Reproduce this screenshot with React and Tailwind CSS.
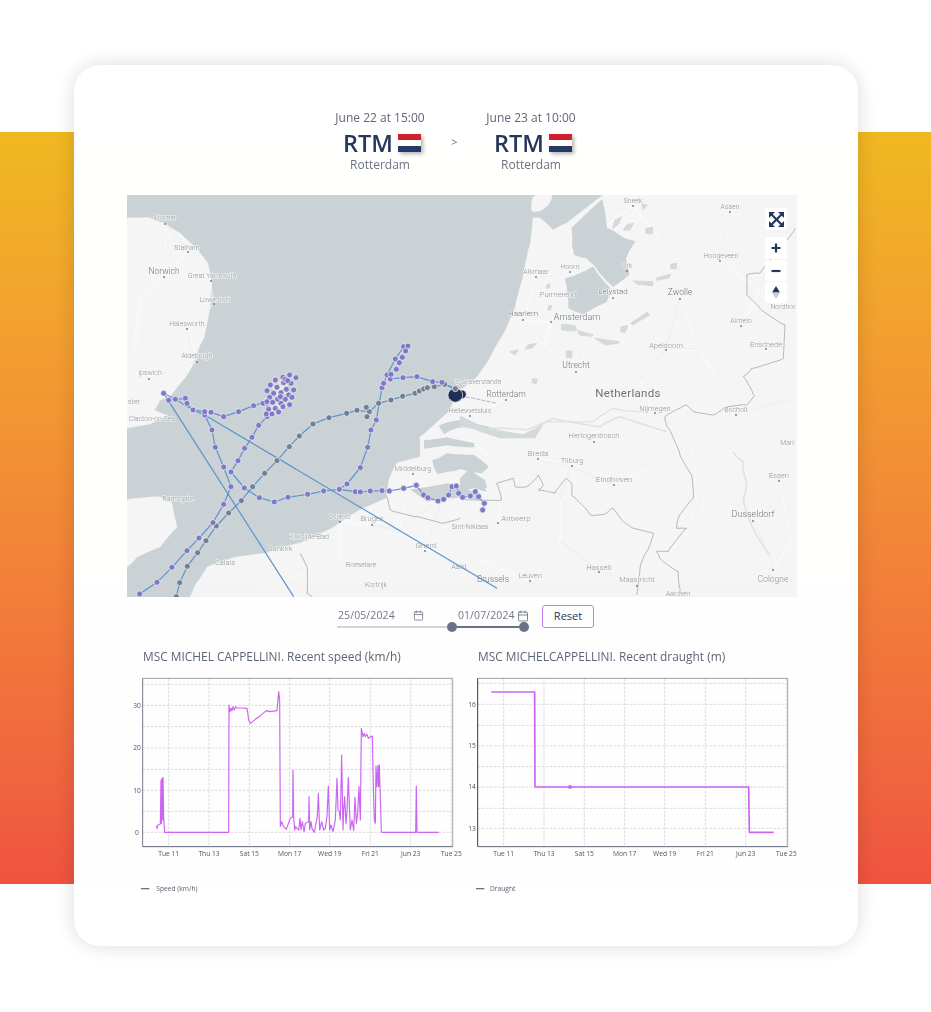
import React from "react";
import { Calendar } from "lucide-react";

const FONT = { fontFamily: '"Open Sans", sans-serif' };

const pts = (a) => a.map((p) => p.join(",")).join(" ");

/* roughen a hand traced outline so coast and border drawings don't look straight */
function jig(list, step = 8, amp = 1.2, closed = false) {
  const out = [];
  const all = closed ? [...list, list[0]] : list;
  for (let i = 0; i < all.length - 1; i++) {
    const [ax, ay] = all[i];
    const [bx, by] = all[i + 1];
    const len = Math.hypot(bx - ax, by - ay);
    const n = Math.max(1, Math.round(len / step));
    const nx = -(by - ay) / (len || 1);
    const ny = (bx - ax) / (len || 1);
    for (let k = 0; k < n; k++) {
      const t = k / n;
      const s = k === 0 ? 0 : Math.sin(ax * 12.9 + ay * 78.2 + k * 37.7) * amp;
      out.push([+(ax + (bx - ax) * t + nx * s).toFixed(1), +(ay + (by - ay) * t + ny * s).toFixed(1)]);
    }
  }
  out.push(all[all.length - 1]);
  return out;
}

const trackA = [[38,762],[90,727],[135,682],[180,632],[216,594],[258,548],[290,493],[312,440],[290,381],[265,322],[255,270],[233,225],[198,210],[145,178],[110,160]];
const trackA2 = [[125,181],[145,178],[175,175],[180,190],[198,210],[233,215],[252,217],[290,230],[335,215],[380,197],[420,185]];
const trackA3 = [[420,230],[395,256],[375,292],[353,325],[333,362],[312,396],[352,444],[397,473],[442,486],[483,472],[542,463],[590,453],[637,448],[685,455],[700,456],[730,453],[765,452],[787,453],[830,445],[868,436],[890,465],[903,473],[933,483],[950,478],[965,465],[975,440],[988,438],[995,460],[1007,472],[1030,468],[1045,455],[1055,470],[1072,490],[1067,510]];
const trackB = [[637,448],[660,432],[700,383],[722,322],[732,270],[748,240],[765,143],[780,105],[805,57],[830,20],[843,18]];
const trackB2 = [[790,117],[828,113],[870,110],[917,125],[945,127],[985,150]];
const extraB = [[817,68],[826,52],[836,33],[808,88],[792,103],[770,130]];
const trackC = [[148,770],[158,728],[181,679],[212,638],[237,602],[268,558],[305,519],[343,482],[377,440],[413,400],[450,362],[487,320],[517,288],[558,252],[606,233],[659,220],[690,211],[727,215],[755,190],[792,180],[827,169],[864,160],[877,153],[890,147],[901,143],[922,140],[953,133],[985,145]];
const extraC = [[718,202],[720,230]];
const cluster = [[468,112],[488,105],[507,113],[445,120],[470,128],[492,130],[430,135],[450,142],[478,148],[500,150],[420,152],[440,160],[462,158],[485,165],[428,172],[452,178],[475,178],[495,172],[408,190],[420,185],[437,187],[462,190],[488,194],[425,208],[445,205],[468,200],[418,222],[435,222],[455,216],[475,118],[460,170],[482,122]];
const clusterLines = [[430,135],[470,178],[440,160],[488,130],[450,142],[495,172],[420,185],[468,112],[428,172],[478,148],[418,222],[462,190],[445,205],[488,194],[435,222],[475,178],[412,178],[450,195]];

const labels = [
  ["Cromer",165,220,7],["Stalham",187,250,7],["Norwich",164,274,8.5,1],["Great Yarmouth",212,278,7],["Lowestoft",215,302,7],["Halesworth",187,326,7],["Aldeburgh",197,358,7],["Ipswich",150,375,7],["ster",134,404,7],["Clacton-on-Sea",152,421,7],["Ramsgate",178,501,7],["Ostend",339,519,7],["Koksijde-Bad",309,539,7],["Dunkirk",280,551,7.5],["Calais",225,565,7.5],["Bruges",372,521,7.5],["Ghent",426,548,8],["Roeselare",361,567,7],["Kortrijk",376,587,7],["Aalst",459,569,7],["Brussels",493,582,8.5,1],["Middelburg",413,471,7.5],["Hellevoetsluis",470,413,7],["'s-Gravenzande",478,384,7],["Rotterdam",506,397,8.5,1],["Sint-Niklaas",470,529,7],
  ["Sneek",633,203,7],["Assen",730,209,7],["Hoogeveen",721,258,7],["Alkmaar",536,274,7],["Hoorn",570,269,7],["Urk",627,268,7],["Purmerend",558,297,7.5],["Lelystad",613,294,8,1],["Zwolle",680,295,8.5,1],["Haarlem",523,316,8,1],["Amsterdam",577,320,9,1],["Almelo",741,323,7],["Apeldoorn",666,348,7.5],["Enschede",766,347,7.5],["Utrecht",576,368,8.5,1],["Nordhor",783,309,7],
  ["Nijmegen",655,411,7.5],["Bocholt",736,412,7],["Hertogenbosch",594,438,7.5],["Breda",538,456,8],["Tilburg",572,463,7.5],["Mari",787,445,7],["Essen",779,478,7.5],["Eindhoven",614,482,8],["Dusseldorf",753,517,9,1],["Antwerp",516,521,8],["Hasselt",599,570,7.5],["Leuven",530,578,7.5],["Maastricht",637,582,7.5],["Cologne",773,582,8.5],["Aachen",678,596,7.5],
];
const towns = [[165,224],[188,252],[164,277],[211,281],[214,304],[187,329],[197,362],[149,379],[340,522],[372,525],[425,551],[413,474],[470,416],[506,400],[633,206],[730,212],[720,261],[536,277],[570,272],[627,271],[613,298],[680,299],[523,320],[551,322],[741,326],[666,350],[766,349],[576,372],[655,413],[736,415],[594,442],[538,459],[572,466],[779,481],[614,485],[753,521],[498,523],[599,572],[530,581],[637,586],[773,570]];

/* extra places that only serve as road junctions */
const junctions = [[140,300],[135,350],[600,230],[660,240],[690,220],[780,230],[760,290],[700,350],[720,380],[640,380],[610,400],[690,440],[650,470],[700,490],[690,530],[720,560],[560,500],[560,540],[480,560],[400,530],[340,560],[300,570],[260,590],[580,340],[545,345],[790,400],[790,540],[470,440],[510,470],[440,500]];
const roadNodes = [...towns, ...junctions];
const roads = [];
roadNodes.forEach((a, i) => {
  const uk = a[0] < 225 && a[1] < 430;
  roadNodes
    .map((b, j) => ({ b, j, d: Math.hypot(a[0] - b[0], a[1] - b[1]) }))
    .filter((o) => o.j !== i && (o.b[0] < 225 && o.b[1] < 430) === uk)
    .sort((x, y) => x.d - y.d)
    .slice(0, 2)
    .forEach((o) => roads.push([a, o.b]));
});

function Dots({ list, fill }) {
  return list.map(([x, y], i) => (
    <circle key={i} cx={x} cy={y} r="9" fill={fill} stroke="#f7f8fb" strokeWidth="2" />
  ));
}

const UK = [[127,218],[140,218],[150,218],[165,223],[180,233],[196,248],[207,262],[210,275],[211,290],[210,308],[204,338],[200,345],[195,360],[185,378],[170,397],[160,400],[154,410],[168,416],[150,424],[127,428]];
const KENT = [[127,500],[160,497],[172,503],[177,527],[160,547],[137,557],[127,567]];
const COAST = [[190,597],[195,585],[207,567],[237,557],[267,553],[300,543],[334,527],[360,510],[387,498],[389,480],[397,463],[420,457],[420,437],[450,410],[460,390],[477,377],[490,358],[503,335],[515,308],[523,278],[530,245],[533,218],[540,218],[553,230],[567,223],[603,195]];

function MapDrawing() {
  return (
    <svg viewBox="127 195 670 402" width="670" height="402" className="block" style={FONT}>
      <rect x="127" y="195" width="670" height="402" fill="#cbd2d6" />
      <g fill="#f4f5f5" stroke="#f4f5f5" strokeWidth="0.5">
        <polygon points={pts(jig(UK, 6, 0.7))} />
        <polygon points={pts(jig(KENT, 6, 0.7))} />
        <polygon points={pts([...jig(COAST, 6, 0.5), [797,195], [797,597]])} />
        <path d="M532 211 C530 200 534 195 536 195 L552 195 C552 205 540 214 532 211Z" />
      </g>

      {/* roads, under the inland water */}
      <g fill="none" opacity="0.75">
        {roads.map(([a, b], i) => (
          <polyline
            key={i}
            points={pts(jig([a, b], 5, 1.1))}
            stroke={i % 3 === 0 ? "#e6e9ea" : "#ffffff"}
            strokeWidth="0.7"
          />
        ))}
      </g>

      {/* inland water, north */}
      <g transform="translate(460 195) scale(0.3333)" fill="#cbd2d6" stroke="#cbd2d6" strokeWidth="6" strokeLinejoin="round">
        <polygon points={pts(jig([[338,100],[425,18],[438,100],[480,125],[522,140],[495,190],[505,238],[460,272],[405,210],[380,187],[345,178],[340,130]], 24, 3, true))} />
        <polygon points={pts(jig([[318,252],[398,218],[448,280],[438,318],[370,355],[328,338]], 24, 3, true))} />
      </g>
      <g transform="translate(460 195) scale(0.3333)" fill="#d4d9dc" stroke="#d4d9dc" strokeWidth="3" strokeLinejoin="round">
        <polygon points="305,388 345,392 350,408 305,405" />
        <polygon points="520,258 578,260 578,272 532,268" />
        <polygon points="512,385 562,352 568,360 518,390" />
        <polygon points="484,395 503,392 495,413 482,410" />
        <polygon points="405,430 476,440 478,444 436,450" />
        <polygon points="354,407 400,420 392,424 358,420" />
        <polygon points="558,100 578,97 578,116 558,116" />
        <polygon points="545,28 562,30 550,44" />
        <polygon points="500,90 520,85 510,105 490,105" />
        <polygon points="465,75 485,65 475,88 458,100" />
        <polygon points="632,208 650,205 648,222 632,220" />
        <polygon points="588,250 632,237 628,248 592,256" />
        <polygon points="320,468 336,468 335,488 320,488" />
        <polygon points="262,268 270,268 268,279 258,279" />
        <polygon points="266,332 276,332 271,346 263,344" />
        <polygon points="217,552 232,552 228,566 217,563" />
        <polygon points="205,450 230,445 215,460 195,462" />
        <polygon points="150,470 175,465 165,480" />
      </g>

      {/* inland water, Zeeland */}
      <g transform="translate(127 340) scale(0.3333)" fill="#cbd2d6" stroke="#cbd2d6" strokeWidth="4" strokeLinejoin="round">
        <polygon points={pts(jig([[938,258],[1000,242],[1108,268],[1108,288],[1040,262],[990,262],[952,280]], 20, 3, true))} />
        <polygon points={pts(jig([[893,302],[960,294],[1040,310],[1040,320],[960,314],[893,324]], 20, 2, true))} />
        <polygon points={pts(jig([[918,362],[960,342],[1040,347],[1083,380],[1063,398],[1000,385],[960,393],[932,400]], 20, 3, true))} />
        <polygon points={pts(jig([[855,450],[960,432],[1000,442],[1060,462],[1060,480],[1000,470],[960,472],[900,483],[872,462]], 20, 2, true))} />
        <polygon points="1042,402 1073,422 1078,443 1060,438" />
      </g>

      {/* rivers and borders, east */}
      <g transform="translate(460 395) scale(0.3333)" fill="none">
        <polyline points={pts(jig([[0,95],[100,100],[200,105],[280,70],[420,95],[480,65],[620,110]], 20, 3))} stroke="#dfe3e5" strokeWidth="5" />
        <polyline points={pts(jig([[230,100],[260,80],[400,80],[460,40],[560,50]], 20, 3))} stroke="#dfe3e5" strokeWidth="4" />
        <polyline points={pts(jig([[820,170],[850,200],[860,260],[850,310],[880,400],[930,480]], 16, 4))} stroke="#dfe3e5" strokeWidth="5" />
        <polygon points="0,250 30,220 60,250 80,290 40,280 0,290" fill="#cbd2d6" />
        <polygon points="0,62 80,100 190,118 250,88 225,130 120,130 60,110 0,85" fill="#d3d9dc" />
        <g stroke="#a6acb3" strokeWidth="2.5" strokeLinejoin="round">
          <polyline points={pts(jig([[0,312],[125,315],[110,265],[160,250],[165,275],[200,275],[235,240],[250,270],[235,285],[285,295],[320,250],[335,265],[335,300],[385,350],[390,360],[440,355],[460,340],[490,380],[520,400],[580,415],[560,470],[540,520],[530,600]], 10, 2.5))} />
          <polyline points={pts(jig([[590,470],[600,490],[655,530],[660,580],[655,608]], 10, 2.5))} />
          <polyline points={pts(jig([[590,470],[625,470],[680,400],[650,400],[655,370],[700,310],[695,240],[660,180],[625,100],[615,65],[660,40],[680,30],[700,50],[760,60],[790,40],[860,30],[885,0]], 10, 2.5))} />
        </g>
      </g>
      <g transform="translate(460 195) scale(0.3333)" fill="none" stroke="#a6acb3" strokeWidth="2.5" strokeLinejoin="round">
        <polyline points={pts(jig([[880,600],[850,545],[875,520],[970,490],[975,390],[900,340],[860,300],[860,240],[900,235],[975,140],[1005,100]], 10, 2.5))} />
      </g>
      <g transform="translate(127 340) scale(0.3333)" fill="none" stroke="#a6acb3" strokeWidth="2.5" strokeLinejoin="round">
        <polyline points={pts(jig([[780,470],[790,510],[870,530],[945,550],[1000,535]], 10, 2.5))} />
        <polyline points={pts(jig([[520,640],[540,680],[540,760],[560,775]], 10, 2.5))} />
        <polyline points="985,165 1040,175 1110,190" stroke="#8e97a1" strokeWidth="2" strokeDasharray="12 4" />
      </g>

      {/* labels */}
      {towns.map(([x, y], i) => (
        <circle key={i} cx={x} cy={y} r="0.9" fill="#6d747d" />
      ))}
      {labels.map(([t, x, y, s, strong], i) => (
        <text
          key={i}
          x={x}
          y={y}
          fontSize={s}
          fontWeight="300"
          textAnchor="middle"
          fill={strong ? "#70767f" : "#8d939b"}
          stroke="#f6f7f7"
          strokeWidth="1.2"
          paintOrder="stroke"
          style={{ fontFamily: "Roboto, sans-serif" }}
        >
          {t}
        </text>
      ))}
      <text x="628" y="397" fontSize="11.5" textAnchor="middle" letterSpacing="0.3" fill="#6b717b" stroke="#f6f7f7" strokeWidth="1.2" paintOrder="stroke" style={{ fontFamily: "Roboto, sans-serif" }}>Netherlands</text>

      {/* tracks */}
      <g transform="translate(127 340) scale(0.3333)">
        <g fill="none" stroke="#5b93cc" strokeWidth="3.5">
          <line x1="110" y1="160" x2="500" y2="770" />
          <line x1="233" y1="225" x2="1110" y2="745" />
          <polyline points={pts(trackA)} />
          <polyline points={pts(trackA2)} />
          <polyline points={pts(trackA3)} />
          <polyline points={pts(trackB)} />
          <polyline points={pts(trackB2)} />
          <polyline points={pts(trackC)} />
          <polyline points="420,185 420,230" />
        </g>
        <Dots list={trackC} fill="#727f93" />
        <Dots list={extraC} fill="#727f93" />
        <Dots list={trackA} fill="#8079c8" />
        <Dots list={trackA2} fill="#8079c8" />
        <Dots list={trackA3} fill="#8079c8" />
        <Dots list={trackB} fill="#8079c8" />
        <Dots list={trackB2} fill="#8079c8" />
        <Dots list={extraB} fill="#8079c8" />
        <polyline points={pts(clusterLines)} fill="none" stroke="#ffffff" strokeWidth="5" />
        <polyline points={pts(clusterLines)} fill="none" stroke="#e3b27a" strokeWidth="1.2" />
        <Dots list={cluster} fill="#8079c8" />
        <circle cx="1005" cy="163" r="13" fill="#1e2f58" stroke="#ffffff" strokeWidth="2" />
        <circle cx="985" cy="166" r="22" fill="#1e2f58" stroke="#ffffff" strokeWidth="2" />
        <circle cx="985" cy="146" r="9" fill="#727f93" stroke="#ffffff" strokeWidth="2" />
        <path d="M970 178 A 17 17 0 0 0 1000 178" fill="none" stroke="#ffffff" strokeWidth="2" />
      </g>
    </svg>
  );
}

function FullscreenIcon() {
  return (
    <svg viewBox="0 0 15 15" width="15" height="15">
      <rect width="15" height="15" fill="#25365f" />
      <g fill="#ffffff">
        <polygon points="6,0 3.75,2.25 7.5,6 11.25,2.25 9,0" />
        <polygon points="6,15 3.75,12.75 7.5,9 11.25,12.75 9,15" />
        <polygon points="0,6 2.25,3.75 6,7.5 2.25,11.25 0,9" />
        <polygon points="15,6 12.75,3.75 9,7.5 12.75,11.25 15,9" />
      </g>
    </svg>
  );
}

function MapControls() {
  const box = "flex items-center justify-center w-[22px] bg-white rounded-[3px]";
  return (
    <div className="absolute top-[13px] right-[10px] flex flex-col">
      <div className={`${box} h-[22px]`}>
        <FullscreenIcon />
      </div>
      <div className={`${box} h-[22px] mt-[7px]`}>
        <svg viewBox="0 0 10 10" width="10" height="10">
          <path d="M5 0.5V9.5M0.5 5H9.5" stroke="#25365f" strokeWidth="2.2" />
        </svg>
      </div>
      <div className={`${box} h-[21px] mt-px`}>
        <svg viewBox="0 0 10 10" width="10" height="10">
          <path d="M0.5 5H9.5" stroke="#25365f" strokeWidth="2.2" />
        </svg>
      </div>
      <div className={`${box} h-[21px] mt-px`}>
        <svg viewBox="0 0 10 16" width="8" height="15">
          <polygon points="5,0 10,8 0,8" fill="#25365f" />
          <polygon points="5,16 10,8 0,8" fill="#c8ccd2" />
        </svg>
      </div>
    </div>
  );
}

function Port({ time }) {
  return (
    <div className="flex flex-col items-center w-[100px]">
      <div className="h-[20px] leading-[20px] text-[12px] whitespace-nowrap text-[#5f6779]">{time}</div>
      <div className="flex items-center h-[28px] gap-[5px] pl-[4px] pt-[1px]">
        <span className="text-[23.5px] leading-[24px] font-semibold text-[#26375e]">RTM</span>
        <span className="flex flex-col w-[23px] h-[18px] shadow-[2px_2px_4px_rgba(0,0,0,0.3)]">
          <span className="h-[6px] bg-[#cc2230]" />
          <span className="h-[6px] bg-white" />
          <span className="h-[6px] bg-[#253a66]" />
        </span>
      </div>
      <div className="h-[18px] leading-[18px] text-[12px] text-[#6b7283]">Rotterdam</div>
    </div>
  );
}

const speed = [[88,558],[90,565],[92,556],[100,552],[102,420],[103,550],[105,415],[107,540],[108,412],[110,535],[113,577],[305,577],[306,195],[309,215],[312,205],[315,212],[318,200],[322,210],[326,200],[330,204],[345,204],[360,205],[363,225],[365,240],[370,250],[385,238],[400,227],[418,212],[428,215],[450,212],[455,155],[458,180],[460,560],[464,545],[470,560],[478,568],[486,545],[490,535],[497,530],[498,390],[500,530],[503,570],[506,560],[510,565],[515,570],[519,535],[522,570],[526,545],[531,575],[535,550],[545,545],[546,470],[548,570],[552,545],[555,565],[562,577],[567,550],[571,530],[574,460],[578,570],[584,545],[590,570],[595,565],[600,530],[604,438],[608,570],[612,555],[618,575],[625,540],[630,415],[633,510],[637,515],[640,540],[644,345],[648,570],[650,510],[653,470],[657,550],[660,515],[664,412],[668,520],[670,570],[675,540],[680,572],[684,472],[688,550],[692,520],[696,440],[700,540],[703,265],[708,290],[712,280],[715,290],[720,283],[724,295],[736,288],[739,440],[742,540],[745,550],[747,378],[750,440],[753,375],[755,440],[757,375],[763,575],[765,577],[866,577],[868,438],[870,577],[935,577]];
const draught = [[88,156],[218,156],[219,441],[860,441],[862,577],[935,577]];
const dayLabels = ["Tue 11","Thu 13","Sat 15","Mon 17","Wed 19","Fri 21","Jun 23","Tue 25"];
const dayX = [125,246,367,488,608,730,851,973];

function Chart({ title, ylabels, minor, points, lineWidth, legend, legendX, leftAxis, extra }) {
  return (
    <div className="w-[335px]">
      <div className="pl-[16px] pt-[7px] h-[24px] leading-[18px] text-[11.9px] whitespace-nowrap text-[#5c6678]">{title}</div>
      <svg viewBox="0 72 1005 708" width="335" height="236" className="block" style={FONT}>
        <g stroke="#c9ccd0" strokeWidth="2" strokeDasharray="8 4" fill="none">
          {dayX.map((x) => (
            <line key={x} x1={x} y1="116" x2={x} y2="620" />
          ))}
          {ylabels.map(([, y]) => (
            <line key={y} x1="47" y1={y} x2="977" y2={y} />
          ))}
          {minor.map((y) => (
            <line key={y} x1="47" y1={y} x2="977" y2={y} />
          ))}
        </g>
        <line x1="47" y1="115" x2="977" y2="115" stroke="#8b8f97" strokeWidth="2.5" />
        <line x1="977" y1="115" x2="977" y2="620" stroke="#b0b3b8" strokeWidth="3.5" />
        <line x1="47" y1="115" x2="47" y2="620" stroke={leftAxis} strokeWidth="3" />
        <line x1="47" y1="620" x2="977" y2="620" stroke="#5f6675" strokeWidth="3" />
        <polyline points={pts(points)} fill="none" stroke="#cb66f2" strokeWidth={lineWidth} strokeLinejoin="round" />
        {extra}
        {ylabels.map(([t, y]) => (
          <text key={t} x="30" y={y + 7} fontSize="20" textAnchor="middle" fill="#4b5565">{t}</text>
        ))}
        {dayLabels.map((t, i) => (
          <text key={t} x={dayX[i]} y="647" fontSize="20" textAnchor="middle" fill="#4b5565">{t}</text>
        ))}
        <line x1="42" y1="746" x2="67" y2="746" stroke="#6b7484" strokeWidth="4" />
        <text x={legendX} y="752" fontSize="20" fill="#5a6272">{legend}</text>
      </svg>
    </div>
  );
}

export default function App() {
  return (
    <div className="relative h-[1012px] overflow-hidden bg-white pt-[65px] pl-[74px]" style={FONT}>
      <div className="absolute inset-x-0 top-[132px] h-[752px] bg-gradient-to-b from-[#f0b820] to-[#ef5340]" />
      <div className="relative w-[784px] h-[881px] rounded-[26px] bg-white pl-[53px] pr-[61px] pt-[43px] opacity-[0.999] shadow-[0_0_22px_rgba(0,0,0,0.15)]">
        <div className="flex justify-center pr-[13px]">
          <Port time="June 22 at 15:00" />
          <div className="w-[51px] h-[68px] flex items-center justify-center pr-[2px] pt-[1px] text-[11px] text-[#6b7283]">&gt;</div>
          <Port time="June 23 at 10:00" />
        </div>

        <div className="relative w-[670px] h-[402px] mt-[19px] overflow-hidden">
          <MapDrawing />
          <MapControls />
        </div>

        <div className="flex h-[43px] pl-[210px] pt-[8px]">
          <div className="flex flex-col w-[192px] pt-[3px]">
            <div className="flex h-[14px] items-center pt-[1px] text-[10.5px] tracking-[0.1px] text-[#73798a]">
              <div className="flex w-[88px] items-center justify-between pl-px">
                <span>25/05/2024</span>
                <Calendar size={11} strokeWidth={1.8} />
              </div>
              <div className="flex w-[72px] ml-[34px] items-center gap-[2px]">
                <span>01/07/2024</span>
                <Calendar size={12} strokeWidth={1.8} />
              </div>
            </div>
            <div className="flex items-center h-[10px]">
              <div className="w-[110px] h-[2px] bg-[#d3d6d6]" />
              <div className="w-[10px] h-[10px] rounded-full bg-[#6b7283]" />
              <div className="w-[62px] h-[2px] bg-[#6b7283]" />
              <div className="w-[10px] h-[10px] rounded-full bg-[#6b7283]" />
            </div>
          </div>
          <button className="ml-[13px] w-[52px] h-[23px] rounded-[3px] border border-[#c77df0] bg-white text-[11px] text-[#26375e]">Reset</button>
        </div>

        <div className="flex">
          <Chart
            title="MSC MICHEL CAPPELLINI. Recent speed (km/h)"
            ylabels={[["0",577],["10",451],["20",324],["30",196]]}
            minor={[514,388,260,133]}
            points={speed}
            lineWidth={3.5}
            legend="Speed (km/h)"
            legendX={88}
            leftAxis="#757a85"
          />
          <Chart
            title="MSC MICHELCAPPELLINI. Recent draught (m)"
            ylabels={[["13",565],["14",441],["15",318],["16",193]]}
            minor={[130,256,380,505]}
            points={draught}
            lineWidth={5}
            legend="Draught"
            legendX={84}
            leftAxis="#2f3b55"
            extra={<circle cx="324" cy="441" r="6" fill="#cb66f2" />}
          />
        </div>
      </div>
    </div>
  );
}
